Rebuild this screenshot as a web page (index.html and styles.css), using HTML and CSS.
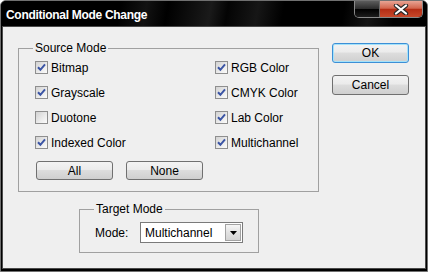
FILE: index.html
```html
<!DOCTYPE html>
<html lang="en">
<head>
  <meta charset="UTF-8">
  <title>Conditional Mode Change</title>
  <link rel="stylesheet" href="styles.css">
</head>
<body>
  <div class="window">
    <div class="titlebar">
      <span class="title">Conditional Mode Change</span>
      <div class="caption">
        <span class="cap-help"></span>
        <span class="cap-close">
          <svg width="18" height="11" viewBox="0 0 18 11">
            <path d="M4 1.5 L14 9.5 M14 1.5 L4 9.5" stroke="#2a2a2a" stroke-width="4.4" stroke-linecap="round" fill="none"/>
            <path d="M4 1.5 L14 9.5 M14 1.5 L4 9.5" stroke="#fff" stroke-width="2.2" stroke-linecap="round" fill="none"/>
          </svg>
        </span>
      </div>
    </div>

    <div class="client">
      <div class="top-row">
        <fieldset class="group source">
          <legend>Source Mode</legend>
          <div class="checks">
            <label class="check"><span class="box"><svg width="11" height="11" viewBox="0 0 11 11"><path d="M2 5.2 L4.4 7.8 L9 2.4" stroke="#3b55a5" stroke-width="2" fill="none"/></svg></span>Bitmap</label>
            <label class="check"><span class="box"><svg width="11" height="11" viewBox="0 0 11 11"><path d="M2 5.2 L4.4 7.8 L9 2.4" stroke="#3b55a5" stroke-width="2" fill="none"/></svg></span>RGB Color</label>
            <label class="check"><span class="box"><svg width="11" height="11" viewBox="0 0 11 11"><path d="M2 5.2 L4.4 7.8 L9 2.4" stroke="#3b55a5" stroke-width="2" fill="none"/></svg></span>Grayscale</label>
            <label class="check"><span class="box"><svg width="11" height="11" viewBox="0 0 11 11"><path d="M2 5.2 L4.4 7.8 L9 2.4" stroke="#3b55a5" stroke-width="2" fill="none"/></svg></span>CMYK Color</label>
            <label class="check"><span class="box"></span>Duotone</label>
            <label class="check"><span class="box"><svg width="11" height="11" viewBox="0 0 11 11"><path d="M2 5.2 L4.4 7.8 L9 2.4" stroke="#3b55a5" stroke-width="2" fill="none"/></svg></span>Lab Color</label>
            <label class="check"><span class="box"><svg width="11" height="11" viewBox="0 0 11 11"><path d="M2 5.2 L4.4 7.8 L9 2.4" stroke="#3b55a5" stroke-width="2" fill="none"/></svg></span>Indexed Color</label>
            <label class="check"><span class="box"><svg width="11" height="11" viewBox="0 0 11 11"><path d="M2 5.2 L4.4 7.8 L9 2.4" stroke="#3b55a5" stroke-width="2" fill="none"/></svg></span>Multichannel</label>
          </div>
          <div class="group-btns">
            <button class="btn small">All</button>
            <button class="btn small">None</button>
          </div>
        </fieldset>

        <div class="side">
          <button class="btn default">OK</button>
          <button class="btn">Cancel</button>
        </div>
      </div>

      <fieldset class="group target">
        <legend>Target Mode</legend>
        <div class="mode-row">
          <span class="mode-label">Mode:</span>
          <div class="select">
            <span class="select-text">Multichannel</span>
            <span class="select-arrow">
              <svg width="7" height="4" viewBox="0 0 7 4"><polygon points="0,0 7,0 3.5,4" fill="#000"/></svg>
            </span>
          </div>
        </div>
      </fieldset>
    </div>
  </div>
</body>
</html>
```

FILE: styles.css
```css
body {
  margin: 0;
  font-family: "Liberation Sans", Arial, sans-serif;
  font-size: 12px;
  color: #000;
  background: #fff;
}

.window {
  width: 428px;
  height: 272px;
  box-sizing: border-box;
  border: 1px solid #707070;
  border-radius: 6px 6px 0 0;
  background: #000;
  display: flex;
  flex-direction: column;
  overflow: hidden;
}

/* title bar */
.titlebar {
  height: 25px;
  flex-shrink: 0;
  display: flex;
  background: linear-gradient(100deg, #000 0, #000 28%, #121212 34%, #000 39%, #1a1a1a 49%, #040404 53%, #161616 60%, #000 66%, #000 80%, #141414 86%, #000 92%);
}

.title {
  color: #fff;
  font-weight: bold;
  font-size: 12px;
  letter-spacing: -0.3px;
  line-height: 13px;
  padding: 8px 0 0 5px;
}

.caption {
  margin-left: auto;
  margin-right: 4px;
  height: 16px;
  display: flex;
  border: 1px solid #8a8a8a;
  border-top: none;
  border-radius: 0 0 5px 5px;
  overflow: hidden;
}

.cap-help {
  width: 24px;
  border-right: 1px solid #6a6a6a;
  background: linear-gradient(#5c5c5c, #2a2a2a 50%, #000 52%, #1c1c1c);
}

.cap-close {
  width: 42px;
  display: flex;
  align-items: center;
  justify-content: center;
  background: linear-gradient(#e8a494, #d2644c 46%, #b42c14 50%, #c8482a);
}

.cap-close svg {
  display: block;
}

/* client area */
.client {
  flex: 1;
  margin: 0 1px 2px;
  border: 1px solid #4a4a4a;
  background: #efefef;
  padding: 14px 0 0 15px;
}

.top-row {
  display: flex;
  align-items: flex-start;
  gap: 13px;
}

.group {
  margin: 0;
  border: 1px solid #a0a0a0;
  box-sizing: border-box;
  min-width: 0;
}

.group legend {
  line-height: 14px;
  padding: 0 2px;
  margin-left: -2px;
}

.source {
  width: 301px;
  padding: 0 16px 11px;
}

.checks {
  display: grid;
  grid-template-columns: 180px auto;
  grid-auto-rows: 25px;
}

.check {
  display: flex;
  align-items: center;
  gap: 3px;
  white-space: nowrap;
}

.box {
  width: 13px;
  height: 13px;
  box-sizing: border-box;
  border: 1px solid #8e8e8e;
  background: linear-gradient(135deg, #d2d2d2, #ececec 60%, #fbfbfb);
}

.box svg {
  display: block;
}

.group-btns {
  display: flex;
  gap: 13px;
  margin-top: 6px;
  padding-left: 1px;
}

.btn {
  width: 77px;
  height: 20px;
  padding: 0;
  font: inherit;
  color: #000;
  border: 1px solid #707070;
  border-radius: 3px;
  background: linear-gradient(#f3f3f3, #ebebeb 45%, #dddddd 50%, #cfcfcf);
}

.btn.small {
  height: 19px;
}

.btn.default {
  border-color: #3c8fd6;
  box-shadow: inset 0 0 0 1px #a4e2fa;
}

.side {
  display: flex;
  flex-direction: column;
  gap: 12px;
  margin-top: 2px;
}

/* target group */
.target {
  width: 180px;
  margin: 10px 0 0 61px;
  padding: 6px 0 9px 15px;
}

.target legend {
  margin-left: -1px;
}

.mode-row {
  display: flex;
  align-items: center;
}

.mode-label {
  width: 45px;
}

.select {
  width: 103px;
  height: 21px;
  box-sizing: border-box;
  border: 1px solid #7a7a7a;
  background: #fff;
  padding: 1px;
  display: flex;
  align-items: center;
}

.select-text {
  flex: 1;
  padding-left: 3px;
}

.select-arrow {
  width: 16px;
  height: 17px;
  box-sizing: border-box;
  border: 1px solid #a2a2a2;
  background: linear-gradient(#f6f6f6, #e2e2e2 50%, #d4d4d4);
  display: flex;
  align-items: center;
  justify-content: center;
}

.select-arrow svg {
  display: block;
}
```
